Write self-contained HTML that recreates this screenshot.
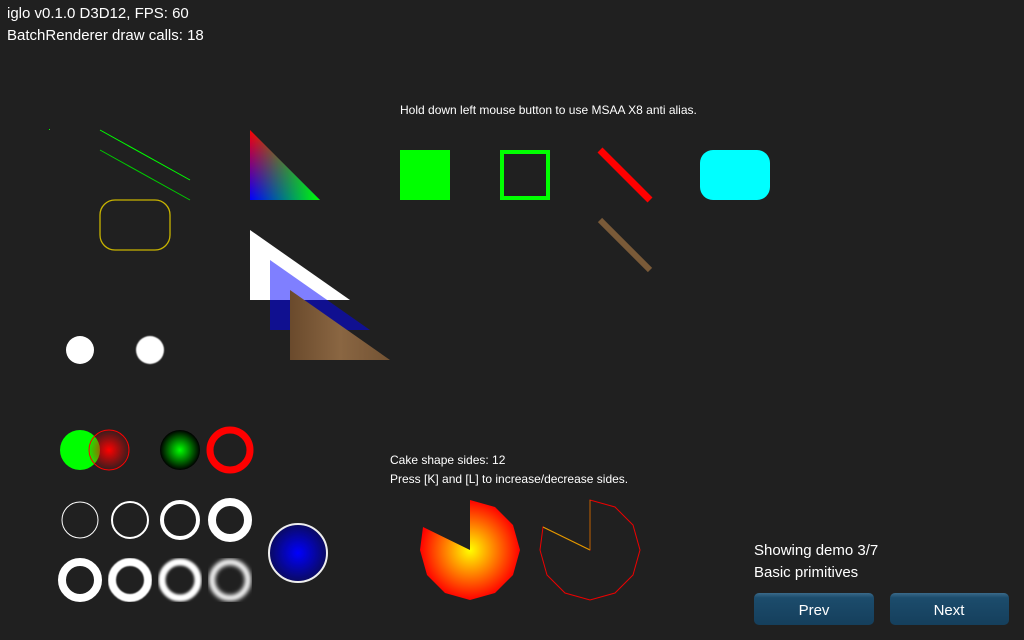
<!DOCTYPE html>
<html><head><meta charset="utf-8"><style>
html,body{margin:0;padding:0;background:#202020;width:1024px;height:640px;overflow:hidden}
svg{position:absolute;left:0;top:0}
.t{font-family:"Liberation Sans",sans-serif;fill:#fff}
</style></head><body>
<svg width="1024" height="640" viewBox="0 0 1024 640">
<defs>
<linearGradient id="rb" x1="0" y1="0" x2="0" y2="1"><stop offset="0" stop-color="#f00"/><stop offset="1" stop-color="#00f"/></linearGradient>
<linearGradient id="gg" x1="0" y1="0" x2="1" y2="0"><stop offset="0" stop-color="#0f0" stop-opacity="0"/><stop offset="1" stop-color="#0f0" stop-opacity="1"/></linearGradient>
<radialGradient id="rr"><stop offset="0" stop-color="#f00"/><stop offset="1" stop-color="#f00" stop-opacity="0.1"/></radialGradient>
<radialGradient id="gr"><stop offset="0" stop-color="#0f0"/><stop offset="1" stop-color="#000"/></radialGradient>
<radialGradient id="br"><stop offset="0" stop-color="#00f"/><stop offset="1" stop-color="#0a0a60"/></radialGradient>
<radialGradient id="yr" cx="470" cy="550" r="50" gradientUnits="userSpaceOnUse"><stop offset="0" stop-color="#ff0"/><stop offset="1" stop-color="#f00"/></radialGradient>
<linearGradient id="wood" x1="0" y1="0" x2="1" y2="0"><stop offset="0" stop-color="#6a4a2c"/><stop offset="0.5" stop-color="#8a6642"/><stop offset="1" stop-color="#735334"/></linearGradient>
<linearGradient id="btn" x1="0" y1="0" x2="0" y2="1"><stop offset="0" stop-color="#3a6a8a"/><stop offset="0.15" stop-color="#1c4c6c"/><stop offset="1" stop-color="#153f5c"/></linearGradient>
<filter id="b1"><feGaussianBlur stdDeviation="0.6"/></filter>
<filter id="b2"><feGaussianBlur stdDeviation="1.2"/></filter>
<filter id="b3"><feGaussianBlur stdDeviation="2"/></filter>
</defs>
<text class="t" x="7" y="18" font-size="15">iglo v0.1.0 D3D12, FPS: 60</text>
<text class="t" x="7" y="40" font-size="15">BatchRenderer draw calls: 18</text>
<text class="t" x="400" y="114" font-size="12">Hold down left mouse button to use MSAA X8 anti alias.</text>
<text class="t" x="390" y="464" font-size="12">Cake shape sides: 12</text>
<text class="t" x="390" y="483" font-size="12">Press [K] and [L] to increase/decrease sides.</text>
<text class="t" x="754" y="555" font-size="15">Showing demo 3/7</text>
<text class="t" x="754" y="577" font-size="15">Basic primitives</text>
<rect x="49" y="129" width="1" height="1" fill="#0f0"/>
<line x1="100" y1="130" x2="190" y2="180" stroke="#0f0"/>
<line x1="100" y1="150" x2="190" y2="200" stroke="#0c0"/>
<rect x="100" y="200" width="70" height="50" rx="15" fill="none" stroke="#c8b400" stroke-width="1.3"/>
<polygon points="250,130 250,200 320,200" fill="url(#rb)"/>
<polygon points="250,130 250,200 320,200" fill="url(#gg)"/>
<polygon points="250,230 250,300 350,300" fill="#fff"/>
<polygon points="270,260 270,330 370,330" fill="#00f" fill-opacity="0.5"/>
<polygon points="290,290 290,360 390,360" fill="url(#wood)"/>
<circle cx="80" cy="350" r="14" fill="#fff"/>
<circle cx="150" cy="350" r="14" fill="#fff" filter="url(#b1)"/>
<circle cx="80" cy="450" r="20" fill="#0f0"/>
<circle cx="109" cy="450" r="20" fill="url(#rr)" stroke="#f00" stroke-width="1"/>
<circle cx="180" cy="450" r="20" fill="url(#gr)"/>
<circle cx="230" cy="450" r="20" fill="none" stroke="#f00" stroke-width="7"/>
<g fill="none" stroke="#fff">
<circle cx="80" cy="520" r="18" stroke-width="1"/>
<circle cx="130" cy="520" r="18" stroke-width="2"/>
<circle cx="180" cy="520" r="18" stroke-width="4"/>
<circle cx="230" cy="520" r="18" stroke-width="8"/>
<circle cx="80" cy="580" r="18" stroke-width="8"/>
<circle cx="130" cy="580" r="18" stroke-width="8" filter="url(#b1)"/>
<circle cx="180" cy="580" r="18" stroke-width="7" filter="url(#b2)"/>
<circle cx="230" cy="580" r="18" stroke-width="6" filter="url(#b3)"/>
</g>
<circle cx="298" cy="553" r="29" fill="url(#br)" stroke="#eee" stroke-width="2"/>
<rect x="400" y="150" width="50" height="50" fill="#0f0"/>
<rect x="502" y="152" width="46" height="46" fill="none" stroke="#0f0" stroke-width="4"/>
<line x1="600" y1="150" x2="650" y2="200" stroke="#f00" stroke-width="7"/>
<line x1="600" y1="220" x2="650" y2="270" stroke="#7a5a38" stroke-width="6"/>
<rect x="700" y="150" width="70" height="50" rx="13" fill="#0ff"/>
<polygon points="470,550 470,500 495,507 513,525 520,550 513,575 495,593 470,600 445,593 427,575 420,550 423,527" fill="url(#yr)"/>
<polygon points="590,550 590,500 615,507 633,525 640,550 633,575 615,593 590,600 565,593 547,575 540,550 543,527" fill="none" stroke="#e00" stroke-width="1"/>
<line x1="543" y1="527" x2="590" y2="550" stroke="#d8a000"/>
<line x1="590" y1="550" x2="590" y2="500" stroke="#c06000"/>
<rect x="754" y="593" width="120" height="32" rx="5" fill="url(#btn)"/>
<rect x="890" y="593" width="119" height="32" rx="5" fill="url(#btn)"/>
<text class="t" x="814" y="615" font-size="15" text-anchor="middle">Prev</text>
<text class="t" x="949" y="615" font-size="15" text-anchor="middle">Next</text>
</svg>
</body></html>
